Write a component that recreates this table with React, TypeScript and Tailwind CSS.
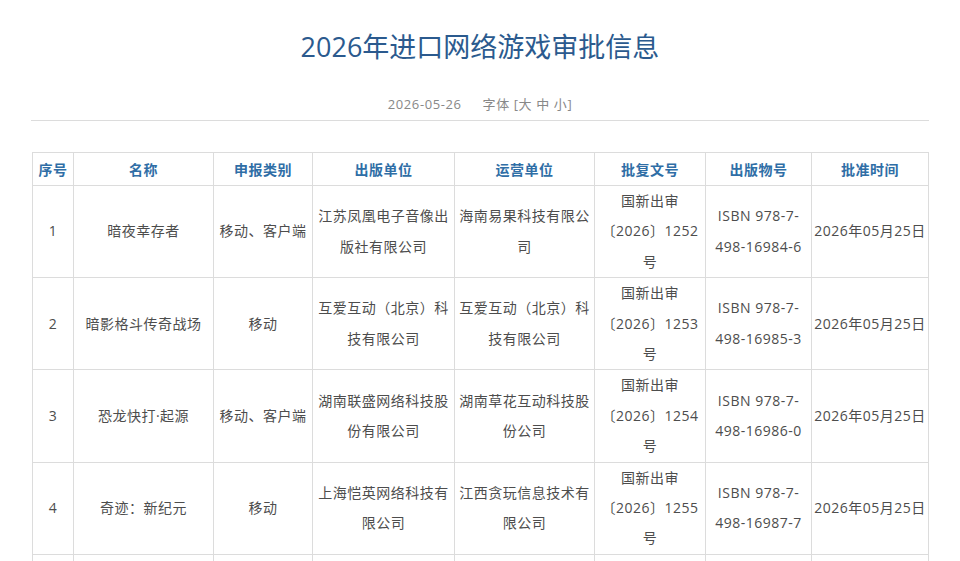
const headers = ['序号', '名称', '申报类别', '出版单位', '运营单位', '批复文号', '出版物号', '批准时间']

const widths = ['w-[41px]', 'w-[140px]', 'w-[99px]', 'w-[142px]', 'w-[140px]', 'w-[111px]', 'w-[106px]', 'w-[117px]']

// each cell is a list of lines, split where the original page wraps
type Cell = string[]

const rows: Cell[][] = [
  [
    ['1'],
    ['暗夜幸存者'],
    ['移动、客户端'],
    ['江苏凤凰电子音像出', '版社有限公司'],
    ['海南易果科技有限公', '司'],
    ['国新出审', '〔2026〕1252', '号'],
    ['ISBN 978-7-', '498-16984-6'],
    ['2026年05月25日'],
  ],
  [
    ['2'],
    ['暗影格斗传奇战场'],
    ['移动'],
    ['互爱互动（北京）科', '技有限公司'],
    ['互爱互动（北京）科', '技有限公司'],
    ['国新出审', '〔2026〕1253', '号'],
    ['ISBN 978-7-', '498-16985-3'],
    ['2026年05月25日'],
  ],
  [
    ['3'],
    ['恐龙快打·起源'],
    ['移动、客户端'],
    ['湖南联盛网络科技股', '份有限公司'],
    ['湖南草花互动科技股', '份公司'],
    ['国新出审', '〔2026〕1254', '号'],
    ['ISBN 978-7-', '498-16986-0'],
    ['2026年05月25日'],
  ],
  [
    ['4'],
    ['奇迹：新纪元'],
    ['移动'],
    ['上海恺英网络科技有', '限公司'],
    ['江西贪玩信息技术有', '限公司'],
    ['国新出审', '〔2026〕1255', '号'],
    ['ISBN 978-7-', '498-16987-7'],
    ['2026年05月25日'],
  ],
]

export default function App() {
  return (
    <div className="min-h-screen bg-white font-['Open_Sans','Noto_Sans_CJK_SC',sans-serif]">
      <div className="mx-auto w-[898px]">
        <h1 className="mt-[27px] text-center text-[27px] font-normal leading-[40px] text-[#2b5a8e]">
          2026年进口网络游戏审批信息
        </h1>
        <div className="mt-[27px] flex justify-center gap-[21px] border-b border-[#dcdcdc] pb-[6px] text-[13px] leading-[20px] tracking-[0.6px] text-[#888]">
          <span>2026-05-26</span>
          <span>字体 [大 中 小]</span>
        </div>
        <table className="mt-[31px] ml-[1px] w-[896px] table-fixed border-collapse text-center text-[14px] tracking-[0.5px] text-[#4d4d4d]">
          <colgroup>
            {widths.map((w, i) => (
              <col key={i} className={w} />
            ))}
          </colgroup>
          <thead>
            <tr>
              {headers.map((h) => (
                <th
                  key={h}
                  className="border border-[#dcdcdc] p-0 font-['Noto_Sans_CJK_SC',sans-serif] text-[14px] font-bold leading-[32px] tracking-[0.5px] text-[#2f6ea6]"
                >
                  {h}
                </th>
              ))}
            </tr>
          </thead>
          <tbody>
            {rows.map((r, ri) => (
              <tr key={ri}>
                {r.map((lines, i) => (
                  <td
                    key={i}
                    className="h-[92px] whitespace-nowrap border border-[#dcdcdc] p-0 align-middle leading-[30.4px]"
                  >
                    {lines.map((l, li) => (
                      <div key={li}>{l}</div>
                    ))}
                  </td>
                ))}
              </tr>
            ))}
            <tr>
              {widths.map((_, i) => (
                <td key={i} className="h-[92px] border border-[#dcdcdc] p-0" />
              ))}
            </tr>
          </tbody>
        </table>
      </div>
    </div>
  )
}
